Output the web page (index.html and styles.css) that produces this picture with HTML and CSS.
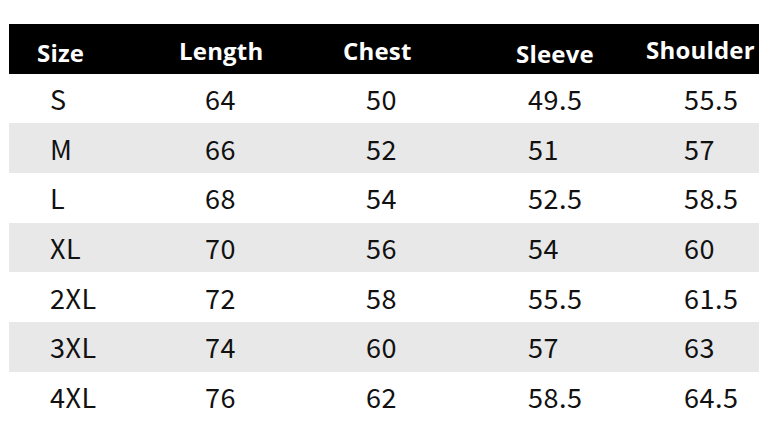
FILE: index.html
```html
<!DOCTYPE html>
<html>
<head>
<meta charset="utf-8">
<link rel="stylesheet" href="styles.css">
</head>
<body>
<div class="page">
  <div class="table">
    <div class="row head">
      <div class="cell c1">Size</div>
      <div class="cell c2">Length</div>
      <div class="cell c3">Chest</div>
      <div class="cell c4">Sleeve</div>
      <div class="cell c5">Shoulder</div>
    </div>
    <div class="row">
      <div class="cell c1">S</div><div class="cell c2">64</div><div class="cell c3">50</div><div class="cell c4">49.5</div><div class="cell c5">55.5</div>
    </div>
    <div class="row alt">
      <div class="cell c1">M</div><div class="cell c2">66</div><div class="cell c3">52</div><div class="cell c4">51</div><div class="cell c5">57</div>
    </div>
    <div class="row">
      <div class="cell c1">L</div><div class="cell c2">68</div><div class="cell c3">54</div><div class="cell c4">52.5</div><div class="cell c5">58.5</div>
    </div>
    <div class="row alt">
      <div class="cell c1">XL</div><div class="cell c2">70</div><div class="cell c3">56</div><div class="cell c4">54</div><div class="cell c5">60</div>
    </div>
    <div class="row">
      <div class="cell c1">2XL</div><div class="cell c2">72</div><div class="cell c3">58</div><div class="cell c4">55.5</div><div class="cell c5">61.5</div>
    </div>
    <div class="row alt">
      <div class="cell c1">3XL</div><div class="cell c2">74</div><div class="cell c3">60</div><div class="cell c4">57</div><div class="cell c5">63</div>
    </div>
    <div class="row">
      <div class="cell c1">4XL</div><div class="cell c2">76</div><div class="cell c3">62</div><div class="cell c4">58.5</div><div class="cell c5">64.5</div>
    </div>
  </div>
</div>
</body>
</html>
```
FILE: styles.css
```css
html, body {
  margin: 0;
  padding: 0;
  background: #ffffff;
}
.page {
  padding: 24px 0 0 9px;
  width: 771px;
  height: 400px;
  overflow: hidden;
}
.table {
  width: 750px;
}
.row {
  display: grid;
  grid-template-columns: 161px 160px 170px 140px 119px;
  height: 49.7px;
  align-items: center;
  font-family: "Noto Sans CJK SC", "Noto Sans", sans-serif;
  font-size: 27px;
  letter-spacing: 0.5px;
  color: #111111;
  background: #ffffff;
}
.row.alt {
  background: #e8e8e8;
}
.row.head {
  height: 49.5px;
  align-items: start;
  background: #000000;
  color: #ffffff;
  font-family: "Open Sans", "Noto Sans", sans-serif;
  font-weight: 700;
  font-size: 24px;
  letter-spacing: 0.2px;
}
.cell {
  white-space: nowrap;
  line-height: 1;
}
.row .c1 { padding-left: 41px; }
.row .c2 { padding-left: 35px; }
.row .c3 { padding-left: 36px; }
.row .c4 { padding-left: 28px; }
.row .c5 { padding-left: 44px; }
.head .c1 { padding-left: 28px; padding-top: 17px; }
.head .c2 { padding-left: 9px; padding-top: 15px; }
.head .c3 { padding-left: 13px; padding-top: 15px; }
.head .c4 { padding-left: 16px; padding-top: 18px; }
.head .c5 { padding-left: 6px; padding-top: 14px; }
```
